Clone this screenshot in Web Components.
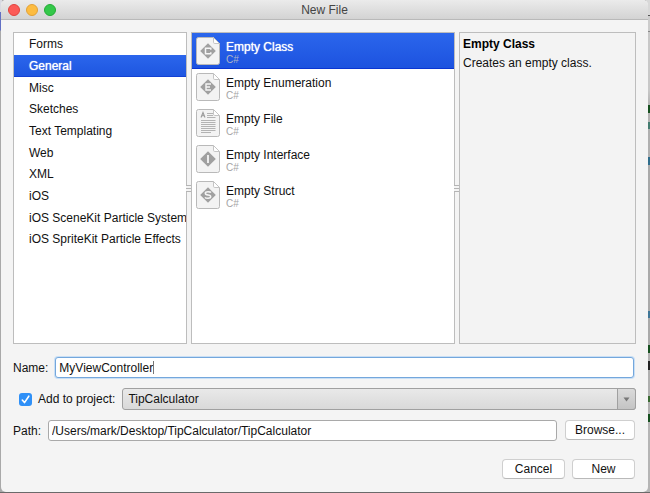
<!DOCTYPE html>
<html lang="en">
<head>
<meta charset="utf-8">
<title>New File</title>
<style>
html,body{margin:0;min-height:100%}
body{
  font:12px/14px "Liberation Sans",Arial,sans-serif;color:#111;
  background:
    linear-gradient(#5d5d5d,#777) left bottom/100% 1px no-repeat,
    linear-gradient(#d9dae2 0 12px,#6270c4 12px 30px,#a9a9a9 31px) left top/2px 100% no-repeat,
    linear-gradient(#d8d8d8 0 15px,#555 15px 16px,#ccc 16px 31px,#888 31px 32px,#c8c8c8 32px 90px,#b2b2b2 105px,
      #16501f 105px 113px,#b2b2b2 113px 122px,#447c70 122px 129px,#b0b0b0 129px 157px,#2f6d8c 157px 165px,
      #aaa 165px 311px,#3f7697 311px 318px,#aaa 318px 345px,#16501f 345px 353px,#b0b0b0 353px 361px,#222 361px 370px,
      #b0b0b0 370px 396px,#3a6b32 396px 402px,#b0b0b0 402px 414px,#16501f 414px 422px,#b5b5b5 422px) right top/4px 100% no-repeat,
    #b0b0b0;
}
</style>
</head>
<body>
<new-file-dialog></new-file-dialog>

<template id="t-dialog">
<style>
:host{display:flex;flex-direction:column;box-sizing:border-box;min-height:100vh;padding:0 2px 1px 1px}
.window{flex:1;display:flex;flex-direction:column;background:#f4f4f4;border-radius:5px;overflow:hidden}
main{flex:1;display:flex;flex-direction:column;padding:12px 12px 13px}
.panes{flex:1;display:grid;grid-template-columns:minmax(0,174fr) minmax(0,264fr) minmax(0,177fr);gap:4px;margin-bottom:13px}
.form{display:flex;flex-direction:column;gap:10px}
.row{display:flex;align-items:center}
.name{gap:7px;padding-right:2px}
.project{gap:7px;padding-left:6px}
.path{gap:8px;padding-right:1px;align-items:flex-start}
text-field{flex:1}
drop-down{flex:1}
.actions{display:flex;justify-content:flex-end;gap:7px;margin-top:18px;padding-right:1px}
h2{font-size:12px;line-height:14px;margin:0 0 5px;color:#000}
p{margin:0}
.info{padding:4px 3px}
</style>
<div class="window">
  <title-bar>New File</title-bar>
  <main>
    <div class="panes">
      <list-pane grip>
        <category-row>Forms</category-row>
        <category-row selected>General</category-row>
        <category-row short>Misc</category-row>
        <category-row>Sketches</category-row>
        <category-row>Text Templating</category-row>
        <category-row short>Web</category-row>
        <category-row>XML</category-row>
        <category-row>iOS</category-row>
        <category-row short>iOS SceneKit Particle Systems</category-row>
        <category-row>iOS SpriteKit Particle Effects</category-row>
      </list-pane>
      <list-pane grip>
        <file-row kind="C" selected>Empty Class<span slot="lang">C#</span></file-row>
        <file-row kind="E">Empty Enumeration<span slot="lang">C#</span></file-row>
        <file-row kind="page">Empty File<span slot="lang">C#</span></file-row>
        <file-row kind="I">Empty Interface<span slot="lang">C#</span></file-row>
        <file-row kind="S">Empty Struct<span slot="lang">C#</span></file-row>
      </list-pane>
      <list-pane plain><div class="info"><h2>Empty Class</h2><p>Creates an empty class.</p></div></list-pane>
    </div>
    <div class="form">
      <div class="row name"><text-field label="Name:" value="MyViewController" active></text-field></div>
      <div class="row project"><check-box>Add to project:</check-box><drop-down label="Project" value="TipCalculator"></drop-down></div>
      <div class="row path"><text-field label="Path:" value="/Users/mark/Desktop/TipCalculator/TipCalculator"></text-field><push-button wide>Browse...</push-button></div>
    </div>
    <div class="actions"><push-button>Cancel</push-button><push-button>New</push-button></div>
  </main>
</div>
</template>

<template id="t-title">
<style>
:host{display:grid;grid-template-columns:1fr auto 1fr;align-items:center;height:20px;box-sizing:border-box;padding:0 7px;
 background:linear-gradient(#ebebeb,#d3d3d3);border-bottom:1px solid #b9b9b9;color:#444}
.lights{display:flex;gap:6px}
button{width:12px;height:12px;padding:0;box-sizing:border-box;border:1px solid #e0443e;border-radius:50%;background:#fc5b57}
.min{background:#fdbc40;border-color:#e2a136}
.max{background:#34c84a;border-color:#24ab35}
h1{font:inherit;margin:0}
</style>
<div class="lights"><button aria-label="Close"></button><button class="min" aria-label="Minimize"></button><button class="max" aria-label="Zoom"></button></div>
<h1><slot></slot></h1>
</template>

<template id="t-pane">
<style>
:host{display:block;position:relative;box-sizing:border-box;border:1px solid #bdbdbd;background:#fff}
:host([plain]){background:#f3f3f3}
.body{overflow:hidden}
.grip{display:none}
:host([grip]) .grip{display:block;position:absolute;left:100%;top:49%;width:5px;height:7px;
 background:repeating-linear-gradient(#b4b4b4 0 1px,#f4f4f4 1px 3px)}
</style>
<div class="body"><slot></slot></div><i class="grip"></i>
</template>

<template id="t-category">
<style>
:host{display:block;height:22px}
:host([short]){height:21px}
button{display:flex;align-items:center;width:100%;height:100%;margin:0;padding:0 0 0 15px;border:0;background:none;font:inherit;color:inherit;white-space:nowrap}
:host([selected]) button{background:linear-gradient(#2b66ec,#1d55e0);box-shadow:inset 0 -1px #1240d4;color:#fff;text-shadow:0 0 1px #fff}
</style>
<button><slot></slot></button>
</template>

<template id="t-file">
<style>
:host{display:block;height:36px}
button{display:flex;align-items:center;gap:6px;width:100%;height:100%;margin:0;padding:0 0 0 4px;border:0;background:none;font:inherit;color:inherit;text-align:left;white-space:nowrap}
:host([selected]) button{background:linear-gradient(#2b66ec,#1c52df);box-shadow:inset 0 -1px #0a35d2;color:#fff;text-shadow:0 0 1px #fff}
svg{width:24px;height:28px;flex:none}
.text{display:flex;flex-direction:column;padding-top:3px}
.lang{font-size:10px;line-height:11px;color:#a5a5a5;text-shadow:none}
:host([selected]) .lang{color:#b0b5c6}
</style>
<button><svg viewBox="0 0 24 28" fill="none"></svg><span class="text"><span><slot></slot></span><span class="lang"><slot name="lang"></slot></span></span></button>
</template>

<template id="t-field">
<style>
:host{display:flex;align-items:center;gap:7px}
.box{flex:1;display:flex;align-items:center;box-sizing:border-box;height:21px;padding:0 3px;border:1px solid #a9a9a9;border-radius:3px;background:#fff}
input{flex:1;min-width:0;margin:0;padding:0;border:0;outline:0;background:none;font:inherit;color:inherit}
.caret{display:none}
:host([active]) .box{border-color:#74a7dc;box-shadow:0 0 0 1px #c9dff5}
:host([active]) input{flex:none;field-sizing:content}
:host([active]) .caret{display:block;width:1px;height:13px;background:#777}
</style>
<label for="f"></label><div class="box"><input id="f" type="text" spellcheck="false"><i class="caret"></i></div>
</template>

<template id="t-check">
<style>
:host{display:block}
label{display:flex;align-items:center;gap:6px}
.mark{display:grid;width:13px;height:13px}
input,svg{grid-area:1/1;width:13px;height:13px;margin:0}
input{appearance:none;border-radius:3px;background:#2f90f7}
svg{pointer-events:none;z-index:1}
</style>
<label><span class="mark"><input type="checkbox" checked><svg viewBox="0 0 13 13" fill="none" stroke="#fff" stroke-width="1.6" stroke-linecap="round" stroke-linejoin="round"><path d="M3.3 7 5.5 9.6 9.8 3.2"/></svg></span><span><slot></slot></span></label>
</template>

<template id="t-drop">
<style>
:host{display:grid;height:22px}
select{grid-area:1/1;appearance:none;width:100%;height:22px;box-sizing:border-box;margin:0;padding:0 24px 0 5px;border:1px solid #a0a0a0;border-radius:3px;background:linear-gradient(#e9e9e9,#d9d9d9);font:inherit;color:inherit}
.arrow{grid-area:1/1;justify-self:end;display:grid;place-items:center;width:19px;height:22px;box-sizing:border-box;border:1px solid #a0a0a0;border-radius:0 3px 3px 0;background:linear-gradient(#dadada,#c4c4c4);pointer-events:none}
</style>
<select><option></option></select><span class="arrow"><svg width="7" height="5"><path d="M0.5 0.5h6L3.5 4.5z" fill="#777"/></svg></span>
</template>

<template id="t-button">
<style>
:host{display:block}
button{display:block;height:20px;min-width:63px;margin:0;padding:0;border:1px solid #cfcfcf;border-bottom-color:#b9b9b9;border-radius:4px;background:#fff;font:inherit;color:#111}
:host([wide]) button{min-width:70px}
</style>
<button><slot></slot></button>
</template>

<script>
function define(name, templateId, setup) {
  customElements.define(name, class extends HTMLElement {
    constructor() {
      super();
      this.attachShadow({ mode: 'open' }).append(document.getElementById(templateId).content.cloneNode(true));
    }
    connectedCallback() { if (setup) setup(this, this.shadowRoot); }
  });
}

const sheet = '<path d="M2.5.5H17.5L23.5 6.5V25.5Q23.5 27.5 21.5 27.5H2.5Q.5 27.5 .5 25.5V2.5Q.5.5 2.5.5Z" fill="#f3f3f3" stroke="#b9b9b9"/><path d="M17.5.5V5.2Q17.5 6.5 18.8 6.5H23.5Z" fill="#fff" stroke="#c4c4c4"/>';
const diamond = '<path d="M12 6.2 19.8 14 12 21.8 4.2 14Z" fill="#a0a0a0"/>';
const glyphs = {
  C: diamond + '<path d="M14.8 12.7V11.2H9.5V16.8H14.8V15.3" stroke="#f5f5f5" stroke-width="1.5"/>',
  E: diamond + '<path d="M15 11H10V17H15M10 14H14" stroke="#f5f5f5" stroke-width="1.4"/>',
  I: diamond + '<path d="M12 10V18" stroke="#f5f5f5" stroke-width="1.8"/>',
  S: diamond + '<path d="M15 11.5Q14.5 10.8 12 10.8 9.3 10.8 9.3 12.3 9.3 13.7 12 14 14.7 14.3 14.7 15.7 14.7 17.2 12 17.2 9.5 17.2 9 16.3" stroke="#f5f5f5" stroke-width="1.5"/>',
  page: '<path d="M5 8.5 7 3.5 9 8.5M5.8 6.8H8.2" stroke="#9a9a9a" stroke-width="1.1"/><path d="M11 4.5H17M11 6.5H17M11 8.5H19.5M5 11.5H19.5M5 13.5H19.5M5 15.5H19.5M5 17.5H19.5M5 19.5H19.5M5 21.5H19.5M5 23.5H15" stroke="#b3b3b3"/>'
};

define('title-bar', 't-title');
define('list-pane', 't-pane');
define('category-row', 't-category');
define('file-row', 't-file', (host, root) => {
  root.querySelector('svg').innerHTML = sheet + glyphs[host.getAttribute('kind')];
});
define('text-field', 't-field', (host, root) => {
  root.querySelector('label').textContent = host.getAttribute('label');
  root.querySelector('input').value = host.getAttribute('value');
});
define('check-box', 't-check');
define('drop-down', 't-drop', (host, root) => {
  root.querySelector('select').setAttribute('aria-label', host.getAttribute('label'));
  root.querySelector('option').textContent = host.getAttribute('value');
});
define('push-button', 't-button');
define('new-file-dialog', 't-dialog');
</script>
</body>
</html>
